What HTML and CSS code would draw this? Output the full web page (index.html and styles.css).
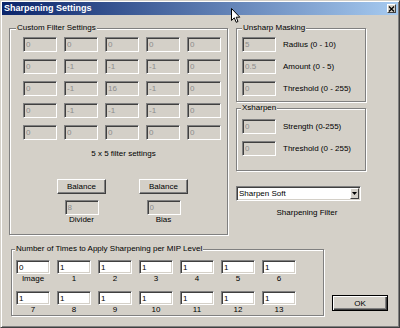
FILE: index.html
```html
<!DOCTYPE html>
<html>
<head>
<meta charset="utf-8">
<title>Sharpening Settings</title>
<link rel="stylesheet" href="styles.css">
</head>
<body>
<div class="window">
  <div class="titlebar">
    <span class="title">Sharpening Settings</span>
    <span class="close"><svg width="7" height="6" viewBox="0 0 7 6"><path d="M1 0.5 L6 5.5 M6 0.5 L1 5.5" stroke="#000" stroke-width="1.3" fill="none"/></svg></span>
  </div>
  <div class="client">
    <div class="top">
      <fieldset class="group custom">
        <legend>Custom Filter Settings</legend>
        <div class="inner">
          <div class="matrix">
            <input class="edit" disabled value="0"><input class="edit" disabled value="0"><input class="edit" disabled value="0"><input class="edit" disabled value="0"><input class="edit" disabled value="0">
            <input class="edit" disabled value="0"><input class="edit" disabled value="-1"><input class="edit" disabled value="-1"><input class="edit" disabled value="-1"><input class="edit" disabled value="0">
            <input class="edit" disabled value="0"><input class="edit" disabled value="-1"><input class="edit" disabled value="16"><input class="edit" disabled value="-1"><input class="edit" disabled value="0">
            <input class="edit" disabled value="0"><input class="edit" disabled value="-1"><input class="edit" disabled value="-1"><input class="edit" disabled value="-1"><input class="edit" disabled value="0">
            <input class="edit" disabled value="0"><input class="edit" disabled value="0"><input class="edit" disabled value="0"><input class="edit" disabled value="0"><input class="edit" disabled value="0">
          </div>
          <div class="caption">5 x 5 filter settings</div>
          <div class="balance">
            <div class="bcol">
              <button class="btn">Balance</button>
              <input class="edit" disabled value="8">
              <span class="blabel">Divider</span>
            </div>
            <div class="bcol">
              <button class="btn">Balance</button>
              <input class="edit" disabled value="0">
              <span class="blabel">Bias</span>
            </div>
          </div>
        </div>
      </fieldset>
      <div class="side">
        <fieldset class="group unsharp">
          <legend>Unsharp Masking</legend>
          <div class="inner">
            <div class="row"><input class="edit" disabled value="5"><span class="rlabel">Radius (0 - 10)</span></div>
            <div class="row"><input class="edit" disabled value="0.5"><span class="rlabel">Amount (0 - 5)</span></div>
            <div class="row"><input class="edit" disabled value="0"><span class="rlabel">Threshold (0 - 255)</span></div>
          </div>
        </fieldset>
        <fieldset class="group xsharpen">
          <legend>Xsharpen</legend>
          <div class="inner">
            <div class="row"><input class="edit" disabled value="0"><span class="rlabel">Strength (0-255)</span></div>
            <div class="row"><input class="edit" disabled value="0"><span class="rlabel">Threshold (0 - 255)</span></div>
          </div>
        </fieldset>
        <div class="combo">
          <span class="combo-text">Sharpen Soft</span>
          <span class="combo-btn"><svg width="5" height="3" viewBox="0 0 5 3"><path d="M0 0 H5 L2.5 3 Z" fill="#000"/></svg></span>
        </div>
        <div class="combo-label">Sharpening Filter</div>
      </div>
    </div>
    <div class="bottom">
      <fieldset class="group mip">
        <legend>Number of Times to Apply Sharpening per MIP Level</legend>
        <div class="inner">
          <div class="mipgrid">
            <div class="cell"><input class="edit on" value="0"><span>Image</span></div>
            <div class="cell"><input class="edit on" value="1"><span>1</span></div>
            <div class="cell"><input class="edit on" value="1"><span>2</span></div>
            <div class="cell"><input class="edit on" value="1"><span>3</span></div>
            <div class="cell"><input class="edit on" value="1"><span>4</span></div>
            <div class="cell"><input class="edit on" value="1"><span>5</span></div>
            <div class="cell"><input class="edit on" value="1"><span>6</span></div>
            <div class="cell"><input class="edit on" value="1"><span>7</span></div>
            <div class="cell"><input class="edit on" value="1"><span>8</span></div>
            <div class="cell"><input class="edit on" value="1"><span>9</span></div>
            <div class="cell"><input class="edit on" value="1"><span>10</span></div>
            <div class="cell"><input class="edit on" value="1"><span>11</span></div>
            <div class="cell"><input class="edit on" value="1"><span>12</span></div>
            <div class="cell"><input class="edit on" value="1"><span>13</span></div>
          </div>
        </div>
      </fieldset>
      <button class="btn ok">OK</button>
    </div>
  </div>
  <svg class="cursor" width="10" height="16" viewBox="0 0 10 16"><path d="M0.5 0.5 V12.5 L3.3 9.8 L5.2 14.3 L7 13.5 L5.2 9.2 H8.8 Z" fill="#fff" stroke="#000" stroke-width="1" stroke-linejoin="miter"/></svg>
</div>
</body>
</html>
```

FILE: styles.css
```css
* { box-sizing: border-box; }
html, body { margin: 0; padding: 0; }
body {
  width: 400px;
  height: 328px;
  overflow: hidden;
  background: #d4d0c8;
  font-family: "Liberation Sans", Arial, sans-serif;
  font-size: 8px;
  color: #000;
}
.window {
  position: relative;
  width: 400px;
  height: 328px;
  padding: 1px;
  border: 1px solid;
  border-color: #d4d0c8 #404040 #404040 #d4d0c8;
  box-shadow: inset 1px 1px 0 #fff, inset -1px -1px 0 #808080;
  display: flex;
  flex-direction: column;
}
.titlebar {
  height: 13px;
  flex: none;
  display: flex;
  align-items: center;
  justify-content: space-between;
  padding: 0 2px;
  background: linear-gradient(to right, #0a246a, #a6caf0);
}
.title {
  color: #fff;
  font-weight: bold;
  font-size: 9px;
  line-height: 13px;
}
.close {
  width: 9px;
  height: 9px;
  display: flex;
  align-items: center;
  justify-content: center;
  background: #d4d0c8;
  border: 1px solid;
  border-color: #fff #404040 #404040 #fff;
}
.client {
  display: flex;
  flex-direction: column;
  padding: 8px 0 0 7px;
}
.top {
  display: flex;
  align-items: flex-start;
  gap: 8px;
}
.group {
  margin: 0;
  padding: 0;
  min-width: 0;
  border: 1px solid #808080;
  box-shadow: 1px 1px 0 #fff, inset 1px 1px 0 #fff;
}
.group legend {
  padding: 0 1px;
  font-size: 8px;
  line-height: 10px;
  background: #d4d0c8;
}
.custom { width: 219px; }
.custom legend { margin-left: 6px; }
.custom .inner { padding: 4px 0 9px 13px; }
.matrix {
  display: grid;
  grid-template-columns: repeat(5, 34px);
  gap: 7px;
}
.edit {
  display: block;
  width: 34px;
  height: 15px;
  margin: 0;
  padding: 0 0 0 2px;
  font: inherit;
  font-size: 8px;
  color: #000;
  background: #fff;
  border: 1px solid;
  border-color: #808080 #fff #fff #808080;
  box-shadow: inset 1px 1px 0 #404040, inset -1px -1px 0 #d4d0c8;
  outline: none;
}
.edit:disabled {
  background: #d4d0c8;
  color: #8c8c8c;
  -webkit-text-fill-color: #8c8c8c;
  opacity: 1;
}
.caption {
  margin-top: 9px;
  padding-right: 3px;
  text-align: center;
  line-height: 10px;
}
.balance {
  display: flex;
  gap: 33px;
  margin-top: 20px;
  padding-left: 34px;
}
.bcol {
  width: 49px;
  display: flex;
  flex-direction: column;
  align-items: center;
}
.bcol .edit { margin-top: 6px; }
.blabel { line-height: 10px; }
.btn {
  width: 49px;
  height: 15px;
  margin: 0;
  padding: 0;
  font: inherit;
  font-size: 8px;
  color: #000;
  background: #d4d0c8;
  border: 1px solid;
  border-color: #fff #404040 #404040 #fff;
  box-shadow: inset -1px -1px 0 #808080;
}
.side {
  width: 130px;
  display: flex;
  flex-direction: column;
}
.unsharp legend { margin-left: 5px; }
.unsharp .inner {
  padding: 4px 0 5px 5px;
  display: flex;
  flex-direction: column;
  gap: 7px;
}
.xsharpen { margin-top: 1px; }
.xsharpen legend { margin-left: 4px; }
.xsharpen .inner {
  padding: 6px 0 14px 5px;
  display: flex;
  flex-direction: column;
  gap: 7px;
}
.row {
  display: flex;
  align-items: center;
}
.rlabel {
  margin-left: 7px;
  line-height: 15px;
  white-space: nowrap;
}
.combo {
  margin-top: 15px;
  width: 125px;
  height: 15px;
  display: flex;
  align-items: center;
  justify-content: space-between;
  background: #fff;
  border: 1px solid;
  border-color: #808080 #fff #fff #808080;
  box-shadow: inset 1px 1px 0 #404040, inset -1px -1px 0 #d4d0c8;
  padding: 1px 1px 1px 2px;
}
.combo-text { line-height: 11px; }
.combo-btn {
  width: 9px;
  height: 11px;
  display: flex;
  align-items: center;
  justify-content: center;
  background: #d4d0c8;
  border: 1px solid;
  border-color: #fff #404040 #404040 #fff;
}
.combo-label {
  margin-top: 7px;
  padding-left: 12px;
  text-align: center;
  line-height: 10px;
}
.bottom {
  display: flex;
  align-items: flex-end;
  margin-top: 9px;
}
.mip {
  margin-left: 2px;
  width: 313px;
}
.mip legend { margin-left: 3px; }
.mip .inner { padding: 6px 0 1px 4px; }
.mipgrid {
  display: grid;
  grid-template-columns: repeat(7, 34px);
  column-gap: 7px;
  row-gap: 8px;
}
.cell {
  display: flex;
  flex-direction: column;
  align-items: center;
}
.cell .edit { height: 14px; }
.cell span { line-height: 9px; }
.ok {
  width: 56px;
  height: 16px;
  margin: 0 0 5px 8px;
  border: 1px solid #000;
  box-shadow: inset 1px 1px 0 #fff, inset -1px -1px 0 #404040, inset -2px -2px 0 #808080;
}
.cursor {
  position: absolute;
  left: 230px;
  top: 7px;
}
```
